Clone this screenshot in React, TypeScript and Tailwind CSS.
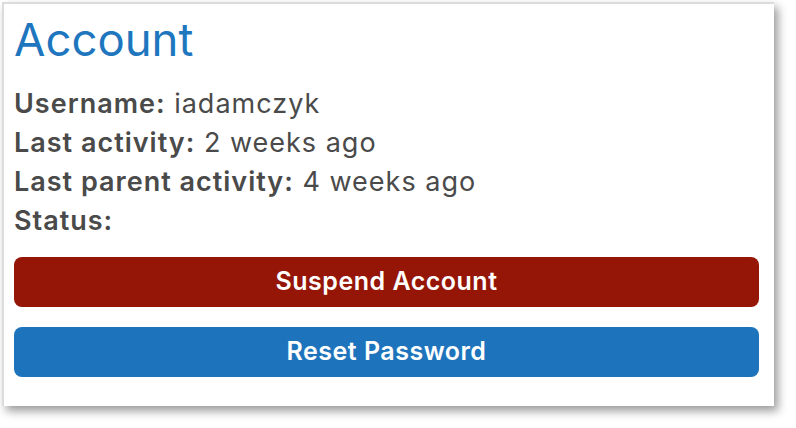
export default function App() {
  return (
    <div className="w-[796px] h-[428px] bg-white" style={{ fontFamily: "Inter, 'Noto Sans', sans-serif" }}>
      <div className="ml-[2px] mt-[2px] w-[772px] h-[404px] bg-white border-t-2 border-l-2 border-[#dcdcdc] shadow-[4px_5px_9px_rgba(0,0,0,0.4)] pl-[10px] pr-[15px] pt-[8px]">
        <h1 className="text-[45.5px] leading-[56px] text-[#1e76be]">Account</h1>
        <div className="mt-[16px] text-[27px] leading-[39px] tracking-[1px] text-[#4a4a4a]">
          <div><span className="font-semibold">Username:</span> iadamczyk</div>
          <div><span className="font-semibold">Last activity:</span> 2 weeks ago</div>
          <div><span className="font-semibold">Last parent activity:</span> 4 weeks ago</div>
          <div><span className="font-semibold">Status:</span></div>
        </div>
        <div className="mt-[17px] flex flex-col gap-[20px]">
          <button className="h-[50px] w-full rounded-[8px] bg-[#951506] text-white text-[25px] tracking-[0.5px] font-semibold">Suspend Account</button>
          <button className="h-[50px] w-full rounded-[8px] bg-[#1e74bc] text-white text-[25px] tracking-[0.5px] font-semibold">Reset Password</button>
        </div>
      </div>
    </div>
  );
}
